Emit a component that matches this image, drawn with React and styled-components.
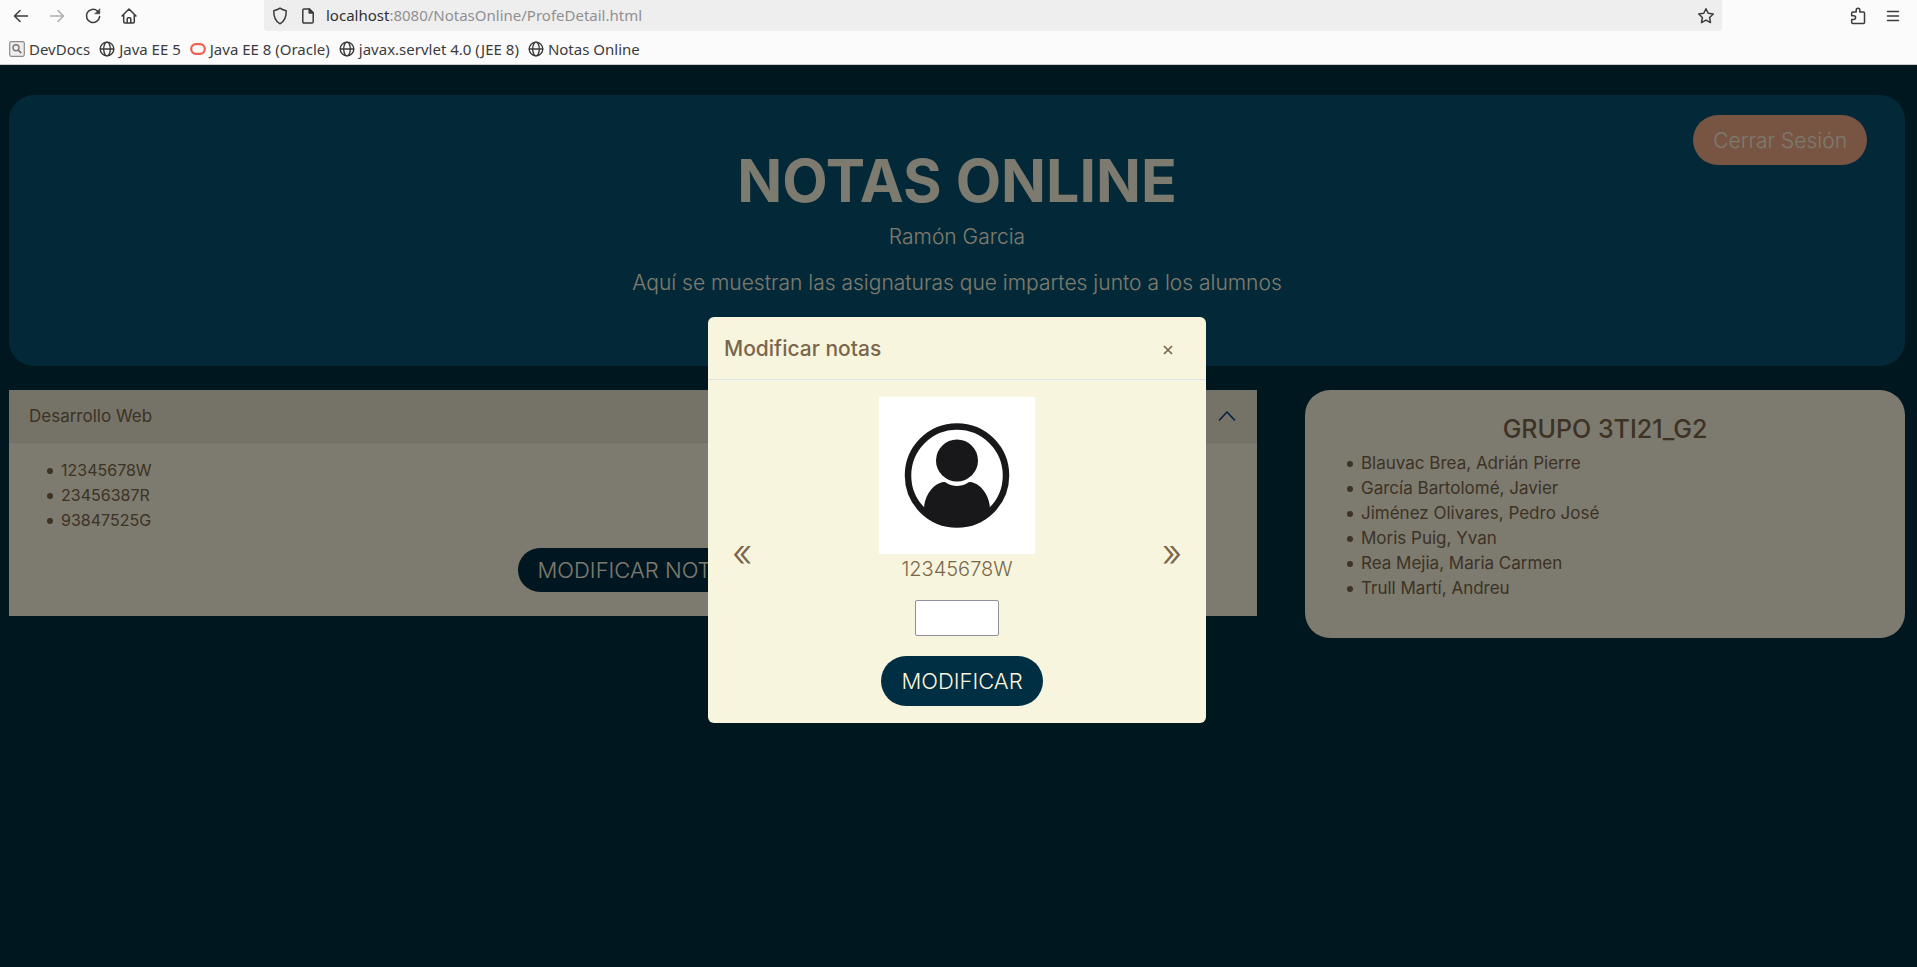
import React from "react";
import styled, { createGlobalStyle, css } from "styled-components";

const colors = {
  night: "#002e3e",
  ocean: "#065270",
  cream: "#f8f5df",
  paper: "#faf5df",
  sand: "#eae5d1",
  orange: "#f0a884",
  brown: "#7a664a",
  navy: "#002e42",
};

const GlobalStyle = createGlobalStyle`
  * { box-sizing: border-box; }
  body {
    margin: 0;
    font-family: Inter, "Liberation Sans", sans-serif;
    color: ${colors.brown};
  }
  h1, h2, p, ul { margin: 0; padding: 0; font-weight: inherit; }
  button { font: inherit; color: inherit; border: 0; padding: 0; background: none; cursor: pointer; }
  a { color: inherit; text-decoration: none; }
`;

const Window = styled.div`
  display: flex;
  flex-direction: column;
  min-height: 100vh;
`;

/* Browser bars */
const Chrome = styled.header`
  background: #fbfbfb;
  border-bottom: 1px solid #ccc;
  color: #3b3b3e;
  font-family: "Noto Sans", "Open Sans", sans-serif;
`;

const NavBar = styled.div`
  display: flex;
  align-items: center;
  height: 31px;
  padding: 0 15px 0 12px;
`;

const NavButtons = styled.nav`
  display: flex;
  gap: 18px;
  width: 252px;
`;

const IconButton = styled.button`
  display: flex;
  opacity: ${(p) => (p.disabled ? 0.4 : 1)};
`;

const AddressBar = styled.div`
  display: flex;
  align-items: center;
  flex: 1;
  height: 31px;
  padding: 0 7px;
  border-radius: 0 0 4px 4px;
  background: #eeeeee;
`;

const AddressIcons = styled.div`
  display: flex;
  gap: 10px;
  width: 55px;
`;

const Url = styled.div`
  flex: 1;
  font-size: 15px;
  line-height: 30px;
  padding-bottom: 1px;
  color: #909092;
  span { color: #303033; }
`;

const NavEnd = styled.div`
  display: flex;
  justify-content: flex-end;
  gap: 17px;
  width: 180px;
`;

const Bookmarks = styled.nav`
  display: flex;
  align-items: center;
  gap: 9px;
  height: 33px;
  padding: 3px 9px 0;
  font-size: 15px;
`;

const Bookmark = styled.a`
  display: flex;
  align-items: center;
  gap: 4px;
  white-space: nowrap;
`;

/* Page */
const Viewport = styled.div`
  position: relative;
  flex: 1;
  padding: 30px 12px 30px 9px;
  background: ${colors.night};
`;

const Hero = styled.section`
  display: grid;
  grid-template-columns: 1fr auto 1fr;
  align-items: start;
  height: 271px;
  padding: 20px 38px;
  border-radius: 25px;
  background: ${colors.ocean};
  color: ${colors.paper};
`;

const HeroText = styled.div`
  grid-column: 2;
  padding-top: 31px;
  text-align: center;
  font-size: 21px;
  font-weight: 300;
  line-height: 30px;
`;

const Title = styled.h1`
  margin-bottom: 6px;
  font-size: 59px;
  font-weight: 700;
  line-height: 70px;
`;

const Lead = styled.p`
  margin-bottom: 16px;
`;

const PillButton = styled.button`
  height: ${(p) => (p.$compact ? 44 : 50)}px;
  padding: 0 20px;
  margin-left: 10px;
  border-radius: 25px;
  font-size: 22px;
  font-weight: 300;
  white-space: nowrap;
  background: ${colors.navy};
  color: ${colors.paper};
  ${(p) => p.$logout && css`
    justify-self: end;
    font-size: 21px;
    background: ${colors.orange};
  `}
`;

const Columns = styled.main`
  display: grid;
  grid-template-columns: 52fr 25fr;
  align-items: start;
  gap: 48px;
  margin-top: 24px;
`;

const Accordion = styled.section`
  background: ${colors.paper};
`;

const AccordionToggle = styled.button`
  display: flex;
  align-items: center;
  justify-content: space-between;
  width: 100%;
  height: 53px;
  padding: 0 21px 0 20px;
  border-bottom: 1px solid #dcdad0;
  background: ${colors.sand};
  font-size: 17px;
  font-weight: 400;
`;

const AccordionBody = styled.div`
  display: flex;
  flex-direction: column;
  gap: 15px;
  padding: 15px 20px 24px;
`;

const NameList = styled.ul`
  padding-left: 18px;
  list-style: none;
  font-size: ${(p) => (p.$ids ? 16 : 17)}px;
  line-height: 25px;
  li {
    display: flex;
    align-items: center;
    gap: 8px;
  }
  li::before {
    content: "";
    width: 6px;
    height: 6px;
    border-radius: 50%;
    background: currentColor;
  }
`;

const CenterRow = styled.div`
  display: flex;
  justify-content: center;
`;

const GroupCard = styled.section`
  height: 248px;
  padding: 23px 24px;
  border-radius: 25px;
  background: ${colors.paper};
`;

const GroupTitle = styled.h2`
  margin-bottom: 6px;
  font-size: 25px;
  font-weight: 500;
  line-height: 32px;
  text-align: center;
`;

/* Dialog */
const Backdrop = styled.div`
  position: absolute;
  inset: 0;
  display: flex;
  justify-content: center;
  align-items: flex-start;
  padding: 252px 3px 0 0;
  background: rgba(0, 0, 0, 0.5);
`;

const Dialog = styled.div`
  width: 498px;
  border-radius: 6px;
  background: ${colors.cream};
`;

const DialogHeader = styled.div`
  display: flex;
  align-items: center;
  justify-content: space-between;
  height: 63px;
  padding: 0 31px 0 16px;
  border-bottom: 1px solid #dee2e6;
`;

const DialogTitle = styled.h2`
  font-size: 21px;
  font-weight: 500;
`;

const DialogBody = styled.form`
  display: grid;
  grid-template-columns: 1fr auto 1fr;
  align-items: center;
  padding: 17px 24px;
`;

const Student = styled.div`
  display: flex;
  flex-direction: column;
  align-items: center;
`;

const Dni = styled.label`
  font-size: 20px;
  font-weight: 300;
  line-height: 30px;
`;

const GradeInput = styled.input`
  width: 84px;
  height: 36px;
  margin: 16px 0 20px;
  padding: 0 8px;
  border: 1px solid #8f8f9d;
  border-radius: 2px;
  background: #fff;
  font: inherit;
`;

const Arrow = styled.button`
  justify-self: ${(p) => p.$side};
  font-size: 38px;
  font-weight: 300;
  line-height: 36px;
`;

const Line = ({ size = 18, children, ...rest }) => (
  <svg width={size} height={size} viewBox="0 0 18 18" fill="none" stroke="currentColor"
    strokeWidth="1.5" strokeLinecap="round" strokeLinejoin="round" aria-hidden="true" {...rest}>
    {children}
  </svg>
);

const BackIcon = () => <Line><path d="M15.5 9H2.7M8 3.5 2.5 9 8 14.5" /></Line>;
const ForwardIcon = () => <Line><path d="M2.5 9h12.8M10 3.5 15.5 9 10 14.5" /></Line>;
const ReloadIcon = () => (
  <Line>
    <path d="M15.6 9.6A6.6 6.6 0 1 1 13.4 4" />
    <path d="M15.8 2v4.8H11z" fill="currentColor" strokeWidth="0.6" />
  </Line>
);
const HomeIcon = () => (
  <Line>
    <path d="M2 9 9 2l7 7M3.7 7.6v7.2c0 .8.4 1.2 1.2 1.2h8.2c.8 0 1.2-.4 1.2-1.2V7.6M7.2 16v-4.2c0-.7.4-1.1 1.1-1.1h1.4c.7 0 1.1.4 1.1 1.1V16" />
  </Line>
);
const ShieldIcon = () => (
  <Line><path d="M9 1.2C7.200 2.700 5 3.300 2.800 3.800c-.2 6.200 1.800 10.700 6.200 13 4.400-2.300 6.400-6.800 6.200-13C13 3.300 10.800 2.700 9 1.200Z" /></Line>
);
const PageIcon = () => (
  <Line>
    <path d="M5 2h5.500l3.700 3.700v9c0 .8-.5 1.300-1.200 1.300H5c-.7 0-1.200-.5-1.200-1.300V3.300C3.800 2.500 4.300 2 5 2Z" />
    <path d="M10.200 2v4h4z" fill="currentColor" />
  </Line>
);
const StarIcon = () => (
  <Line><path d="m9 1.700 2.200 4.600 5.100.7-3.700 3.500.9 5.100L9 13.200l-4.500 2.400.9-5.100L1.700 7l5.100-.7z" /></Line>
);
const PuzzleIcon = () => (
  <Line><path d="M2.700 8.800V6.100c0-.7.4-1.100 1-1.100h3.500V3.100a1.800 1.800 0 0 1 3.600 0V5h3.700c.7 0 1 .4 1 1.100v9.300c0 .7-.3 1-1 1H3.700c-.7 0-1-.3-1-1v-3h2.100a1.800 1.800 0 0 0 0-3.600z" /></Line>
);
const MenuIcon = () => <Line><path d="M3.500 4.500h11M3.500 9h11M3.500 13.500h11" /></Line>;
const GlobeIcon = () => (
  <Line size={16}>
    <circle cx="9" cy="9" r="7.700" />
    <ellipse cx="9" cy="9" rx="3.700" ry="7.700" />
    <path d="M1.500 9h15" />
  </Line>
);
const DocsIcon = () => (
  <svg width="16" height="16" viewBox="0 0 16 16" fill="none" aria-hidden="true">
    <rect x="0.700" y="0.700" width="14.600" height="14.600" rx="1.500" fill="#eee" stroke="#8a8a8a" strokeWidth="1.200" />
    <circle cx="7" cy="6.700" r="3" stroke="#777" strokeWidth="1.400" />
    <path d="m9.200 9 3 3.200" stroke="#777" strokeWidth="1.800" />
  </svg>
);
const OracleIcon = () => (
  <svg width="16" height="16" viewBox="0 0 16 16" fill="none" aria-hidden="true">
    <rect x="1.200" y="3.200" width="13.600" height="9.600" rx="4.800" stroke="#ee5f4c" strokeWidth="2.200" />
  </svg>
);
const ChevronIcon = () => (
  <svg width="18" height="18" viewBox="0 0 18 18" fill="none" stroke="#0c3f78" strokeWidth="1.600"
    strokeLinecap="round" strokeLinejoin="round" aria-hidden="true">
    <path d="m1.500 13 7.500-8 7.500 8" />
  </svg>
);
const CloseIcon = () => (
  <svg width="14" height="14" viewBox="0 0 14 14" stroke="currentColor" strokeWidth="1.700" aria-hidden="true">
    <path d="m3 5 8 8M11 5l-8 8" />
  </svg>
);
const Portrait = () => (
  <svg width="156" height="157" viewBox="0 0 156 157" role="img" aria-label="Foto del alumno">
    <defs>
      <clipPath id="ring"><circle cx="78" cy="78.500" r="51" /></clipPath>
    </defs>
    <rect width="156" height="157" fill="#fff" />
    <g fill="#18181a">
      <circle cx="78" cy="78.500" r="49" fill="none" stroke="#18181a" strokeWidth="6.500" />
      <circle cx="78" cy="63.500" r="21" />
      <path clipPath="url(#ring)" d="M45 112c0-11 7-23 16-26 3-1.300 5-1.300 7 .3 6 3.600 14 3.600 20 0 2-1.600 4-1.600 7-.3 9 3 16 15 16 26l-8 20H53z" />
    </g>
  </svg>
);

const bookmarks = [
  { label: "DevDocs", Icon: DocsIcon },
  { label: "Java EE 5", Icon: GlobeIcon },
  { label: "Java EE 8 (Oracle)", Icon: OracleIcon },
  { label: "javax.servlet 4.0 (JEE 8)", Icon: GlobeIcon },
  { label: "Notas Online", Icon: GlobeIcon },
];
const students = ["12345678W", "23456387R", "93847525G"];
const members = [
  "Blauvac Brea, Adrián Pierre",
  "García Bartolomé, Javier",
  "Jiménez Olivares, Pedro José",
  "Moris Puig, Yvan",
  "Rea Mejia, Maria Carmen",
  "Trull Martí, Andreu",
];

export default function App() {
  return (
    <Window>
      <GlobalStyle />
      <Chrome>
        <NavBar>
          <NavButtons>
            <IconButton aria-label="Atrás"><BackIcon /></IconButton>
            <IconButton aria-label="Adelante" disabled><ForwardIcon /></IconButton>
            <IconButton aria-label="Recargar"><ReloadIcon /></IconButton>
            <IconButton aria-label="Inicio"><HomeIcon /></IconButton>
          </NavButtons>
          <AddressBar>
            <AddressIcons><ShieldIcon /><PageIcon /></AddressIcons>
            <Url><span>localhost</span>:8080/NotasOnline/ProfeDetail.html</Url>
            <IconButton aria-label="Marcador"><StarIcon /></IconButton>
          </AddressBar>
          <NavEnd>
            <IconButton aria-label="Extensiones"><PuzzleIcon /></IconButton>
            <IconButton aria-label="Menú"><MenuIcon /></IconButton>
          </NavEnd>
        </NavBar>
        <Bookmarks>
          {bookmarks.map(({ label, Icon }) => (
            <Bookmark href="#" key={label}><Icon />{label}</Bookmark>
          ))}
        </Bookmarks>
      </Chrome>
      <Viewport>
        <Hero>
          <HeroText>
            <Title>NOTAS ONLINE</Title>
            <Lead>Ramón Garcia</Lead>
            <Lead>Aquí se muestran las asignaturas que impartes junto a los alumnos</Lead>
          </HeroText>
          <PillButton $logout>Cerrar Sesión</PillButton>
        </Hero>
        <Columns>
          <Accordion>
            <AccordionToggle aria-expanded="true">Desarrollo Web<ChevronIcon /></AccordionToggle>
            <AccordionBody>
              <NameList $ids>{students.map((s) => <li key={s}>{s}</li>)}</NameList>
              <CenterRow><PillButton $compact>MODIFICAR NOTAS</PillButton></CenterRow>
            </AccordionBody>
          </Accordion>
          <GroupCard>
            <GroupTitle>GRUPO 3TI21_G2</GroupTitle>
            <NameList>{members.map((m) => <li key={m}>{m}</li>)}</NameList>
          </GroupCard>
        </Columns>
        <Backdrop>
          <Dialog role="dialog" aria-modal="true" aria-labelledby="dialog-title">
            <DialogHeader>
              <DialogTitle id="dialog-title">Modificar notas</DialogTitle>
              <IconButton aria-label="Cerrar"><CloseIcon /></IconButton>
            </DialogHeader>
            <DialogBody>
              <Arrow type="button" $side="start" aria-label="Anterior">«</Arrow>
              <Student>
                <Portrait />
                <Dni htmlFor="grade">12345678W</Dni>
                <GradeInput id="grade" type="text" />
                <PillButton type="submit">MODIFICAR</PillButton>
              </Student>
              <Arrow type="button" $side="end" aria-label="Siguiente">»</Arrow>
            </DialogBody>
          </Dialog>
        </Backdrop>
      </Viewport>
    </Window>
  );
}
